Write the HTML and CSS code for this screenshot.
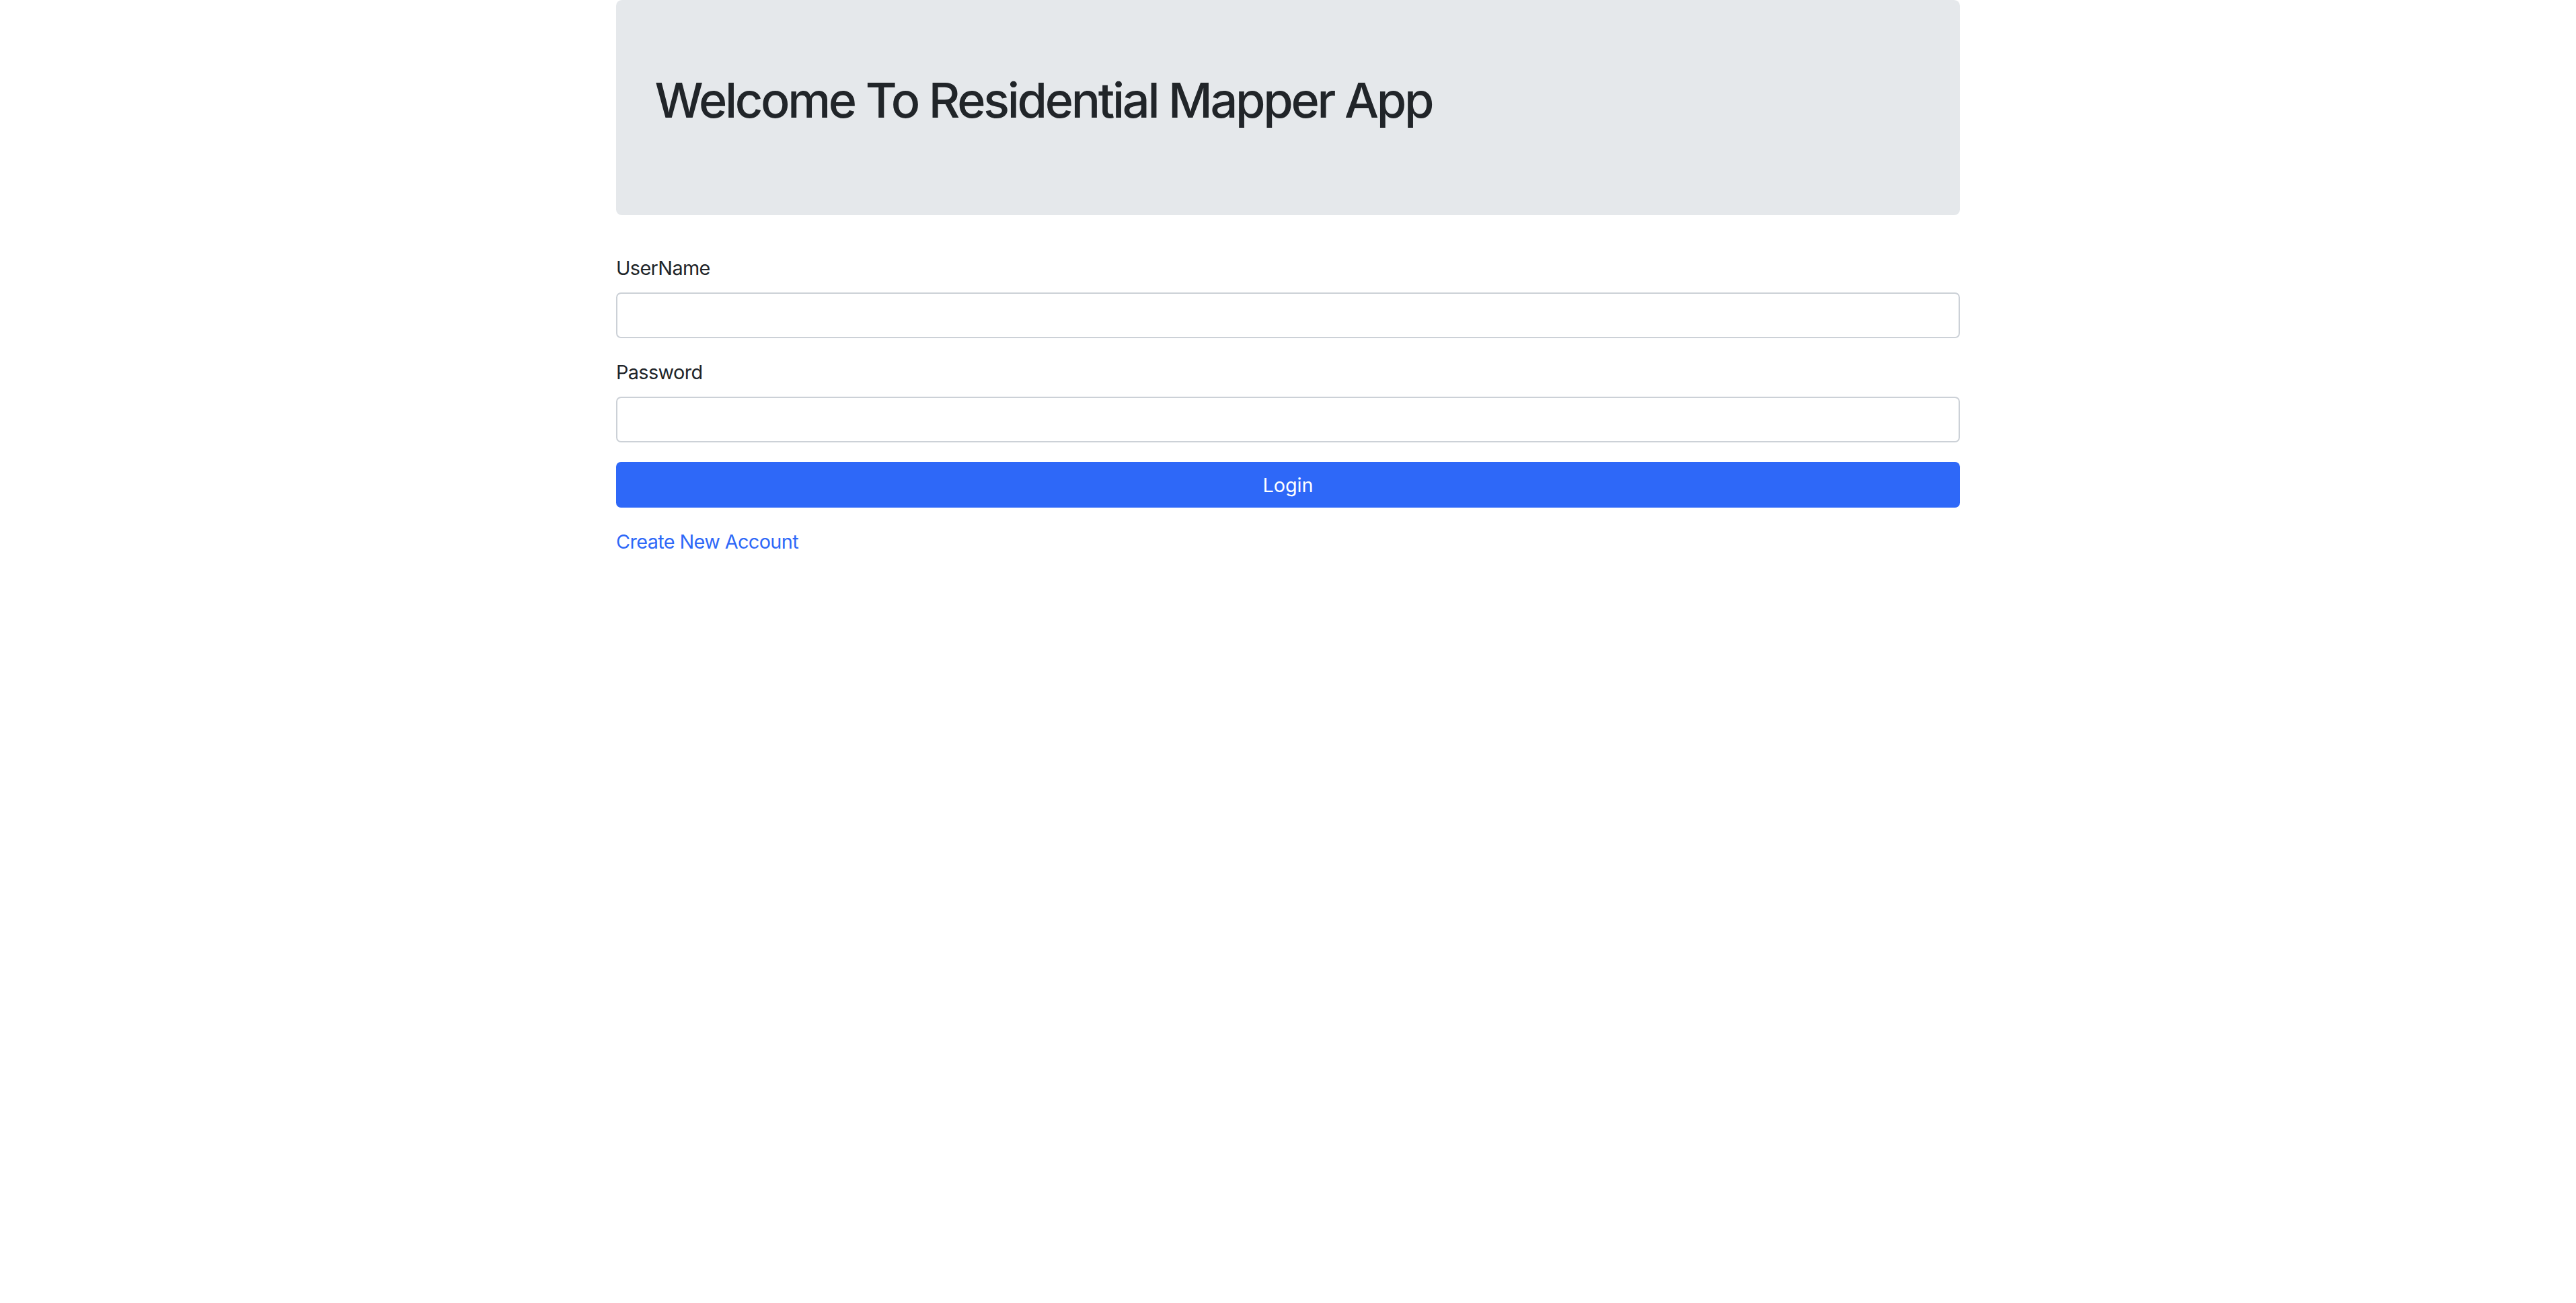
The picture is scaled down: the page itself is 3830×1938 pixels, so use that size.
FILE: index.html
```html
<!DOCTYPE html>
<html lang="en">
<head>
<meta charset="utf-8">
<title>Residential Mapper App</title>
<link rel="stylesheet" href="styles.css">
</head>
<body>
<div class="container">
  <div class="jumbotron">
    <h1 class="title">Welcome To Residential Mapper App</h1>
  </div>
  <form class="login-form">
    <div class="form-group">
      <label class="form-label" for="username">UserName</label>
      <input class="form-control" type="text" id="username">
    </div>
    <div class="form-group">
      <label class="form-label" for="password">Password</label>
      <input class="form-control" type="password" id="password">
    </div>
    <button class="btn-primary" type="button">Login</button>
  </form>
  <div class="account-link">
    <a class="link" href="#">Create New Account</a>
  </div>
</div>
</body>
</html>
```
FILE: styles.css
```css
html, body {
  margin: 0;
  padding: 0;
  background: #ffffff;
}

body {
  font-family: Inter, "Liberation Sans", sans-serif;
  font-size: 28.8px;
  line-height: 1.5;
  letter-spacing: -0.6px;
  color: #212529;
}

.container {
  width: 1998px;
  margin: 0 auto;
}

.jumbotron {
  background: #e5e8eb;
  border-radius: 8.6px;
  padding: 106px 57.6px 113px;
  margin-bottom: 57.6px;
}

.title {
  margin: 0 0 14.4px;
  font-size: 72px;
  font-weight: 500;
  line-height: 1.2;
  letter-spacing: -3.3px;
  color: #212529;
}

.login-form {
  display: flex;
  flex-direction: column;
}

.form-group {
  display: flex;
  flex-direction: column;
  margin-bottom: 28.8px;
}

.form-label {
  display: block;
  margin-bottom: 14.4px;
  line-height: 43.2px;
  color: #212529;
}

.form-control {
  box-sizing: border-box;
  display: block;
  width: 100%;
  height: 68.4px;
  margin: 0;
  padding: 0 21.6px;
  font: inherit;
  border: 2px solid #ccd1d7;
  border-radius: 7.2px;
  background: #ffffff;
  outline: none;
}

.btn-primary {
  box-sizing: border-box;
  display: block;
  width: 100%;
  height: 68.4px;
  margin: 0;
  padding: 0;
  font: inherit;
  line-height: 43.2px;
  color: #ffffff;
  background: #2e68f8;
  border: none;
  border-radius: 7.2px;
  text-align: center;
}

.account-link {
  margin-top: 28.8px;
  line-height: 43.2px;
}

.link {
  color: #2e68f8;
  text-decoration: none;
}
```
